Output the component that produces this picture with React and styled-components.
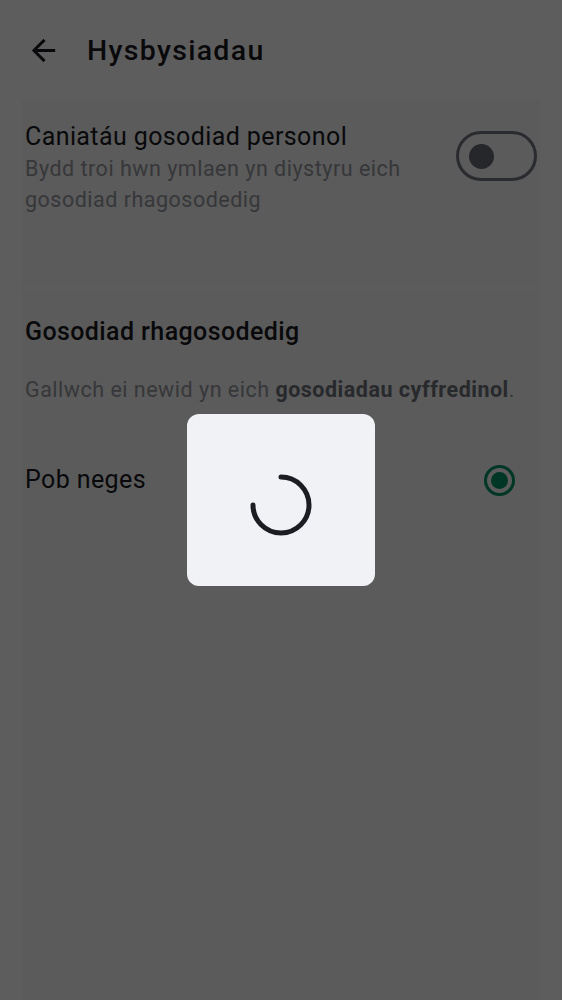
import React from "react";
import styled, { createGlobalStyle } from "styled-components";

const Global = createGlobalStyle`
  html, body { margin: 0; padding: 0; background: #ffffff; }
  body { font-family: Roboto, "Noto Sans", sans-serif; -webkit-font-smoothing: antialiased; }
  * { box-sizing: border-box; }
`;

const Page = styled.div`
  min-height: 1000px;
  background: #ffffff;
  display: flex;
  flex-direction: column;
`;

const AppBar = styled.header`
  height: 100px;
  display: flex;
  align-items: center;
  padding-left: 26px;
  gap: 26px;
  background: #ffffff;
`;

const Title = styled.h1`
  margin: 0;
  font-size: 28.5px;
  font-weight: 500;
  color: #1b1b1f;
  letter-spacing: 1.3px;
`;

const Content = styled.main`
  flex: 1;
  margin: 0 22px;
  display: flex;
  flex-direction: column;
  gap: 2px;
  background: #ffffff;
`;

const Section = styled.section`
  background: #f8f8f9;
  padding: ${(p) => p.$pad};
  display: flex;
  flex-direction: column;
  flex: ${(p) => (p.$grow ? 1 : "none")};
`;

const Row = styled.div`
  display: flex;
  align-items: ${(p) => p.$align || "center"};
  justify-content: space-between;
  gap: 16px;
  min-height: ${(p) => p.$h || "auto"};
  margin-top: ${(p) => p.$mt || "0"};
`;

const TextCol = styled.div`
  display: flex;
  flex-direction: column;
  gap: 1px;
  max-width: 400px;
`;

const ItemTitle = styled.div`
  font-size: 25px;
  line-height: 30px;
  letter-spacing: 0.4px;
  color: #1b1b1f;
  font-weight: ${(p) => p.$weight || 400};
`;

const Subtitle = styled.div`
  font-size: 21.5px;
  line-height: 31px;
  letter-spacing: 0.5px;
  color: #96989f;
  margin-top: ${(p) => p.$mt || "0"};
  b { font-weight: 700; color: #6f7278; }
`;

const SwitchTrack = styled.div`
  width: 81px;
  height: 50px;
  margin-top: 9px;
  border: 3px solid #74777f;
  border-radius: 25px;
  display: flex;
  align-items: center;
  padding-left: 10px;
  flex-shrink: 0;
`;

const SwitchKnob = styled.div`
  width: 25px;
  height: 25px;
  border-radius: 50%;
  background: #686b73;
`;

const Radio = styled.div`
  width: 31px;
  height: 31px;
  border-radius: 50%;
  border: 3px solid #009468;
  display: flex;
  align-items: center;
  justify-content: center;
  margin-right: 22px;
  &::after {
    content: "";
    width: 17px;
    height: 17px;
    border-radius: 50%;
    background: #009468;
  }
`;

const Scrim = styled.div`
  position: fixed;
  inset: 0;
  background: rgba(0, 0, 0, 0.635);
  display: flex;
  align-items: center;
  justify-content: center;
`;

const Dialog = styled.div`
  width: 188px;
  height: 172px;
  border-radius: 12px;
  background: #f1f2f6;
  display: flex;
  align-items: center;
  justify-content: center;
  padding-top: 10px;
`;

const BackIcon = () => (
  <svg width="35" height="35" viewBox="0 0 24 24" fill="#1b1b1f">
    <path d="M20 11H7.83l5.59-5.59L12 4l-8 8 8 8 1.41-1.41L7.83 13H20v-2z" />
  </svg>
);

const Spinner = () => (
  <svg width="66" height="66" viewBox="0 0 66 66">
    <path
      d="M33 5 A28 28 0 1 1 5 33"
      fill="none"
      stroke="#1c1d22"
      strokeWidth="5"
      strokeLinecap="round"
    />
  </svg>
);

export default function App() {
  return (
    <>
      <Global />
      <Page>
        <AppBar>
          <BackIcon />
          <Title>Hysbysiadau</Title>
        </AppBar>
        <Content>
          <Section $pad="22px 3px 72px 3px">
            <Row $align="flex-start">
              <TextCol>
                <ItemTitle>Caniatáu gosodiad personol</ItemTitle>
                <Subtitle>
                  Bydd troi hwn ymlaen yn diystyru eich gosodiad rhagosodedig
                </Subtitle>
              </TextCol>
              <SwitchTrack>
                <SwitchKnob />
              </SwitchTrack>
            </Row>
          </Section>
          <Section $pad="28px 3px 0 3px" $grow>
            <ItemTitle $weight={500}>Gosodiad rhagosodedig</ItemTitle>
            <Subtitle $mt="27px">
              Gallwch ei newid yn eich <b>gosodiadau cyffredinol</b>.
            </Subtitle>
            <Row $h="58px" $mt="46px">
              <ItemTitle>Pob neges</ItemTitle>
              <Radio />
            </Row>
          </Section>
        </Content>
      </Page>
      <Scrim>
        <Dialog>
          <Spinner />
        </Dialog>
      </Scrim>
    </>
  );
}
